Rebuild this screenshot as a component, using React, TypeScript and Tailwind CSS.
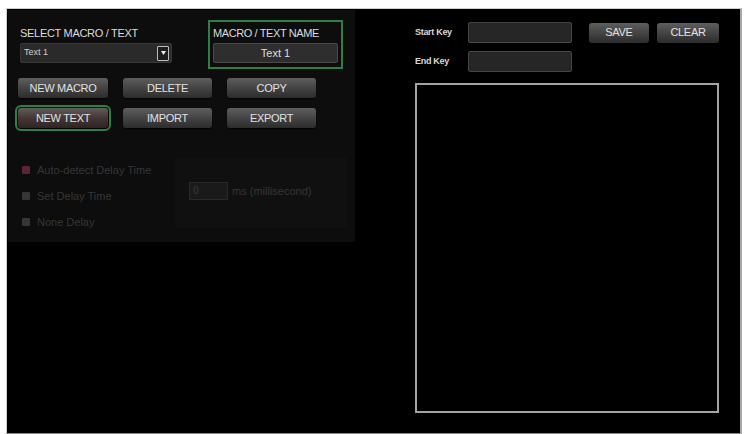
import { useState } from 'react';

const btn =
  'h-[20px] rounded-[3px] bg-gradient-to-b from-[#5e5e5e] via-[#444] to-[#2c2c2c] text-[11px] leading-none text-[#e2e2e2] tracking-[-0.3px] shadow-[0_1px_1px_rgba(0,0,0,0.8)] flex items-center justify-center';

function DelayOption({ label, active }: { label: string; active?: boolean }) {
  return (
    <div className="flex items-center h-[14px]">
      <span className={`w-[8px] h-[8px] rounded-[1px] ${active ? 'bg-[#5a2634]' : 'bg-[#363636]'}`} />
      <span className="ml-[7px] text-[11px] text-[#363636]">{label}</span>
    </div>
  );
}

export default function App() {
  const [name, setName] = useState('Text 1');

  return (
    <div className="w-[745px] h-[434px] bg-white pl-[6px] pt-[8px] overflow-hidden" style={{ fontFamily: '"Liberation Sans", Arial, sans-serif' }}>
      <div className="w-[736px] h-[426px] bg-black border border-[#cfcfcf] border-r-2 border-r-[#a8a8a8] border-b-[#8a8a8a] flex">
        {/* left: macro settings */}
        <div className="ml-[1px] mt-[1px] w-[347px] h-[232px] bg-[#0d0d0d] flex flex-col">
          <div className="flex pt-[10px] pl-[12px]">
            <div className="w-[152px] pt-[6px]">
              <div className="h-[14px] text-[11px] leading-[14px] text-[#dcdcdc] tracking-[-0.3px]">SELECT MACRO / TEXT</div>
              <div className="mt-[3px] h-[20px] bg-[#2a2a2a] border border-[#383838] rounded-[2px] flex items-center pl-[3px] pr-[2px]">
                <span className="text-[9px] text-[#cfcfcf] flex-1">Text 1</span>
                <span className="w-[12px] h-[15px] border border-[#bdbdbd] bg-[#1e1e1e] rounded-[1px] flex items-center justify-center">
                  <svg width="5" height="4" viewBox="0 0 5 4">
                    <path d="M0 0h5L2.5 4z" fill="#eee" />
                  </svg>
                </span>
              </div>
            </div>
            <div className="ml-[36px] w-[135px] h-[49px] border-2 border-[#2f7d47] px-[3px] pt-[4px]">
              <div className="h-[14px] text-[11px] leading-[14px] text-[#dcdcdc] tracking-[-0.4px]">MACRO / TEXT NAME</div>
              <input
                value={name}
                onChange={e => setName(e.target.value)}
                className="mt-[3px] w-full h-[20px] bg-[#2e2e2e] border border-[#4a4a4a] rounded-[2px] text-center text-[11px] text-[#dedede] outline-none"
              />
            </div>
          </div>

          <div className="mt-[9px] ml-[10px] grid grid-cols-[90px_89px_89px] gap-x-[15px] gap-y-[10px]">
            <button className={btn}>NEW MACRO</button>
            <button className={btn}>DELETE</button>
            <button className={btn}>COPY</button>
            <button className={`${btn} from-[#5c4848] via-[#463636] to-[#2e2424] outline-2 outline-offset-[1px] outline-[#2f7d47]`}>NEW TEXT</button>
            <button className={btn}>IMPORT</button>
            <button className={btn}>EXPORT</button>
          </div>

          <div className="mt-[35px] ml-[14px] flex">
            <div className="w-[153px] flex flex-col gap-[12px]">
              <DelayOption label="Auto-detect Delay Time" active />
              <DelayOption label="Set Delay Time" />
              <DelayOption label="None Delay" />
            </div>
            <div className="-mt-[5px] w-[172px] h-[70px] bg-[#101010] flex items-center pl-[14px] pb-[4px]">
              <span className="w-[39px] h-[18px] bg-[#1a1a1a] border border-[#2a2a2a] text-[10px] text-[#3a3a3a] pl-[3px] leading-[16px]">0</span>
              <span className="ml-[4px] text-[11px] text-[#363636]">ms (millisecond)</span>
            </div>
          </div>
        </div>

        {/* right: key binding */}
        <div className="ml-[60px] pt-[13px] w-[304px] flex flex-col">
          <div className="flex items-center h-[21px]">
            <span className="w-[53px] text-[9px] font-bold text-[#d8d8d8] tracking-[-0.3px]">Start Key</span>
            <span className="w-[104px] h-[21px] bg-[#262626] border border-[#454545] rounded-[2px]" />
            <button className={`${btn} ml-[17px] w-[60px]`}>SAVE</button>
            <button className={`${btn} ml-[8px] w-[62px]`}>CLEAR</button>
          </div>
          <div className="mt-[8px] flex items-center h-[21px]">
            <span className="w-[53px] text-[9px] font-bold text-[#d8d8d8] tracking-[-0.3px]">End Key</span>
            <span className="w-[104px] h-[21px] bg-[#262626] border border-[#454545] rounded-[2px]" />
          </div>
          <div className="mt-[11px] h-[330px] border-2 border-[#a3a3a3] bg-black" />
        </div>
      </div>
    </div>
  );
}
